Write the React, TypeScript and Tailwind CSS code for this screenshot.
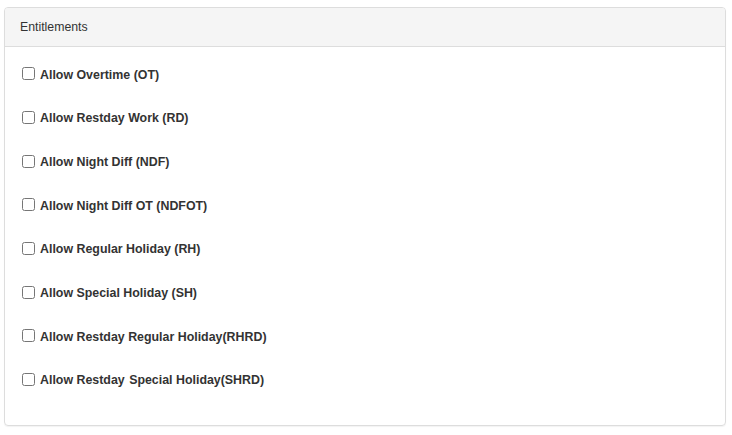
import React from 'react';

const items = [
  'Allow Overtime (OT)',
  'Allow Restday Work (RD)',
  'Allow Night Diff (NDF)',
  'Allow Night Diff OT (NDFOT)',
  'Allow Regular Holiday (RH)',
  'Allow Special Holiday (SH)',
  'Allow Restday Regular Holiday(RHRD)'
];

export default function App() {
  return (
    <div className="w-[732px] h-[435px] bg-white pt-[7px] pl-[4px] font-['Liberation_Sans',Arial,sans-serif] text-[#333]">
      {/* Panel */}
      <div className="w-[722px] h-[419px] border border-[#ddd] rounded-[4px] shadow-[0_1px_1px_rgba(0,0,0,0.05)] overflow-hidden">
        <div className="h-[39px] bg-[#f5f5f5] border-b border-[#ddd] px-[15px] flex items-center text-[12.3px]">
          Entitlements
        </div>
        <div className="pt-[6px] px-[17px]">
          {items.map((label, i) =>
          <label key={i} className="h-[43.7px] flex items-center gap-[5px] text-[12.4px] font-bold">
              <input type="checkbox" className="w-[13px] h-[13px] m-0 relative -top-[1px]" />
              {label}
            </label>
          )}
          <label className="h-[43.7px] flex items-center gap-[5px] text-[12.4px] font-bold">
            <input type="checkbox" className="w-[13px] h-[13px] m-0 relative -top-[1px]" />
            <span>
              Allow Restday <span className="ml-[1px]">Special Holiday(SHRD)</span>
            </span>
          </label>
        </div>
      </div>
    </div>);

}
